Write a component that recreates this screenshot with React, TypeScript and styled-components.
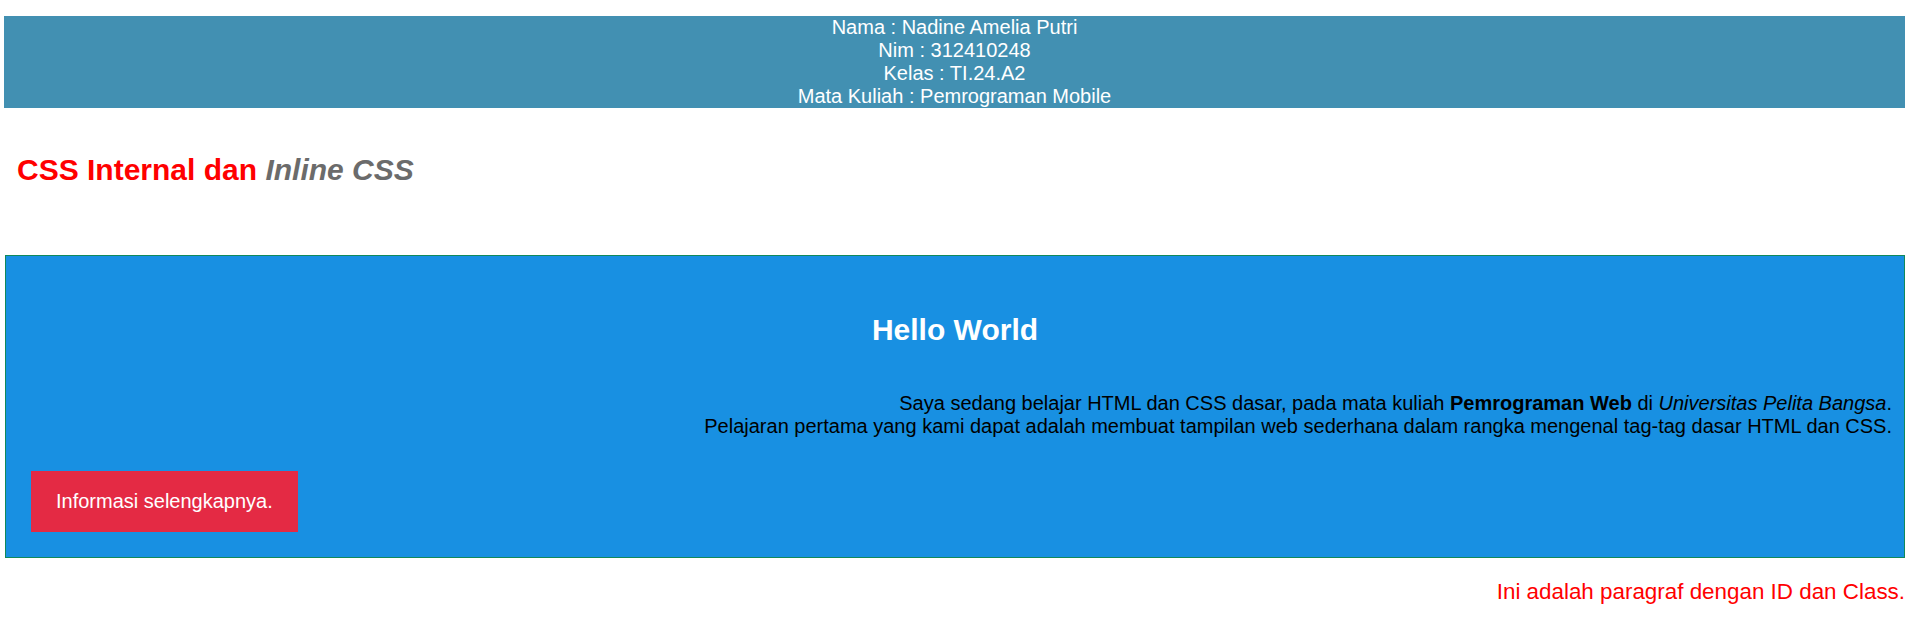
import React from 'react';
import styled, { createGlobalStyle } from 'styled-components';

const GlobalStyle = createGlobalStyle`
  body {
    margin: 0;
    background: #ffffff;
    font-family: "Liberation Sans", Arial, sans-serif;
  }
`;

const Page = styled.div`
  padding: 16px 9px 0 4px;
`;

const Header = styled.header`
  background: #4290b2;
  color: #ffffff;
  text-align: center;
  font-size: 20px;
  line-height: 23px;
`;

const Title = styled.h2`
  margin: 44px 0 0 13px;
  font-size: 30px;
  line-height: 35px;
  font-weight: bold;
  color: #ff0000;
`;

const Muted = styled.i`
  color: #6b6b6b;
`;

const Card = styled.section`
  margin: 68px 0 0 1px;
  background: #1890e2;
  border: 1px solid #11895b;
  padding: 56px 12px 25px;
  display: flex;
  flex-direction: column;
`;

const CardTitle = styled.h1`
  margin: 0;
  text-align: center;
  color: #ffffff;
  font-size: 30px;
  line-height: 35px;
  font-weight: bold;
`;

const CardText = styled.p`
  margin: 45px 0 0;
  text-align: right;
  color: #000000;
  font-size: 20px;
  line-height: 23px;
`;

const MoreButton = styled.button`
  align-self: flex-start;
  margin: 33px 0 0 13px;
  padding: 19px 25px;
  border: none;
  background: #e42a44;
  color: #ffffff;
  font-family: inherit;
  font-size: 20px;
  line-height: 23px;
  cursor: pointer;
`;

const Note = styled.p`
  margin: 21px 0 0;
  text-align: right;
  color: #ff0000;
  font-size: 22.4px;
  line-height: 26px;
`;

const App: React.FC = () => {
  return (
    <>
      <GlobalStyle />
      <Page>
        <Header>
          <div>Nama : Nadine Amelia Putri</div>
          <div>Nim : 312410248</div>
          <div>Kelas : TI.24.A2</div>
          <div>Mata Kuliah : Pemrograman Mobile</div>
        </Header>

        <Title>
          CSS Internal dan <Muted>Inline CSS</Muted>
        </Title>

        <Card>
          <CardTitle>Hello World</CardTitle>
          <CardText>
            Saya sedang belajar HTML dan CSS dasar, pada mata kuliah <b>Pemrograman Web</b> di{' '}
            <i>Universitas Pelita Bangsa</i>.
            <br />
            Pelajaran pertama yang kami dapat adalah membuat tampilan web sederhana dalam rangka
            mengenal tag-tag dasar HTML dan CSS.
          </CardText>
          <MoreButton>Informasi selengkapnya.</MoreButton>
        </Card>

        <Note id="para1" className="teks">
          Ini adalah paragraf dengan ID dan Class.
        </Note>
      </Page>
    </>
  );
};

export default App;
